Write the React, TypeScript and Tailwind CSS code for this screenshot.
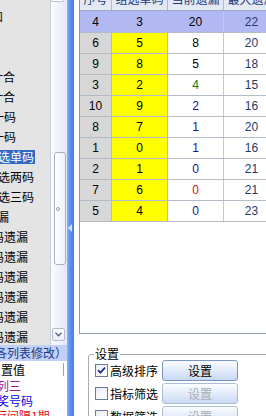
const leftItems = [
  { t: '和', c: '-ml-[9px]' },
  { t: '', c: '' },
  { t: '', c: '' },
  { t: '计合', c: '-ml-[9px]' },
  { t: '计合', c: '-ml-[9px]' },
  { t: '一码', c: '-ml-[8px]' },
  { t: '一码', c: '-ml-[8px]' },
  { t: '选单码', c: '-ml-[2px] h-[14px] leading-[14px] pr-[1px] bg-[#316ac5] text-white' },
  { t: '选两码', c: '-ml-[2px]' },
  { t: '选三码', c: '-ml-[2px]' },
  { t: '漏', c: '-ml-[3px]' },
  { t: '码遗漏', c: '-ml-[8px]' },
  { t: '码遗漏', c: '-ml-[8px]' },
  { t: '码遗漏', c: '-ml-[8px]' },
  { t: '码遗漏', c: '-ml-[8px]' },
  { t: '码遗漏', c: '-ml-[8px]' },
  { t: '码遗漏', c: '-ml-[8px]' },
]

const rows = [
  { v: ['4', '3', '20', '22'], c3: 'text-black', sel: true },
  { v: ['6', '5', '8', '20'], c3: 'text-black' },
  { v: ['9', '8', '5', '18'], c3: 'text-black' },
  { v: ['3', '2', '4', '15'], c3: 'text-[#0a7a0a]' },
  { v: ['10', '9', '2', '16'], c3: 'text-[#14148c]' },
  { v: ['8', '7', '1', '20'], c3: 'text-[#14148c]' },
  { v: ['1', '0', '1', '16'], c3: 'text-[#14148c]' },
  { v: ['2', '1', '0', '21'], c3: 'text-[#14148c]' },
  { v: ['7', '6', '0', '21'], c3: 'text-[#d81010]' },
  { v: ['5', '4', '0', '23'], c3: 'text-[#14148c]' },
]

const options = [
  { label: '高级排序', checked: true, enabled: true },
  { label: '指标筛选', checked: false, enabled: false },
  { label: '数据筛选', checked: false, enabled: false },
]

const Checkbox = ({ checked }: { checked: boolean }) => (
  <div className="flex h-[13px] w-[13px] shrink-0 items-center justify-center border border-[#6b7b95] bg-[linear-gradient(135deg,#e9ecf1,#ffffff)]">
    {checked && (
      <svg width="9" height="9" viewBox="0 0 9 9">
        <path d="M1 4.2 L3.4 6.6 L8 1.6" fill="none" stroke="#1f2f8f" strokeWidth="1.8" />
      </svg>
    )}
  </div>
)

export default function App() {
  return (
    <div className="flex h-[416px] w-[266px] overflow-hidden bg-white font-['Noto_Sans_CJK_SC',sans-serif] text-[12px] text-black">
      {/* left column: list + scrollbar, notes panel */}
      <div className="flex w-[67px] shrink-0 flex-col">
        <div className="flex h-[345px] shrink-0">
          <div className="w-[50px] overflow-hidden bg-[#e4e4e4] pt-[7px]">
            {leftItems.map((it, i) => (
              <div key={i} className="flex h-[20px] items-center whitespace-nowrap leading-[14px]">
                <span className={`shrink-0 ${it.c}`}>{it.t}</span>
              </div>
            ))}
          </div>
          <div className="flex w-[17px] flex-col border-l border-[#c9cdd6] bg-[linear-gradient(to_right,#fdfdff,#e2e7f5)]">
            <div className="h-[2px] w-[13px] rounded-b-[2px] border-x border-b border-[#b9c2d3] bg-white" />
            <div className="h-[150px]" />
            <div className="ml-[3px] flex h-[113px] w-[12px] items-center rounded-[3px] border border-[#a6b1c5] bg-[linear-gradient(to_right,#ffffff,#eef1f8)]">
              <div className="ml-[1px] h-[4px] w-[4px] rounded-full border border-[#9aa3b3]" />
            </div>
            <div className="flex-1" />
            <div className="ml-[1px] flex h-[13px] w-[13px] items-center justify-center rounded-[2px] border border-[#b2bccd] bg-[linear-gradient(#ffffff,#e8edf7)]">
              <svg width="7" height="5" viewBox="0 0 7 5">
                <path d="M0.5 0.8 L3.5 3.8 L6.5 0.8" fill="none" stroke="#4d6185" strokeWidth="1.3" />
              </svg>
            </div>
            <div className="h-[4px]" />
          </div>
        </div>
        <div className="flex h-[16px] shrink-0 items-center overflow-hidden whitespace-nowrap bg-[#c1d0f4] leading-[14px] text-[#183a8c]">
          <span className="-ml-[5px] shrink-0">各列表修改）</span>
        </div>
        <div className="flex-1 overflow-hidden bg-white leading-[14px]">
          <div className="flex h-[17px] items-center whitespace-nowrap">
            <span className="ml-[1px] w-[62px]">置值</span>
            <div className="h-[13px] w-px bg-[#a3a3a3]" />
          </div>
          <div className="flex h-[15px] items-center whitespace-nowrap text-[#9a1a9a]">
            <span className="-ml-[3px]">列三</span>
          </div>
          <div className="flex h-[15px] items-center whitespace-nowrap text-[#0a0ae6]">
            <span className="-ml-[3px]">奖号码</span>
          </div>
          <div className="flex h-[15px] items-center whitespace-nowrap text-[#e01010]">
            <span className="-ml-[5px]">行间隔1期</span>
          </div>
        </div>
      </div>

      {/* splitter */}
      <div className="flex w-[7px] shrink-0 flex-col bg-[linear-gradient(to_right,#8cb1f8,#5b8ef0_45%,#4a7fe8)]">
        <div className="h-[224px]" />
        <div className="ml-[1px] h-0 w-0 border-y-[4px] border-r-[4px] border-y-transparent border-r-[#d6e2fc]" />
      </div>

      {/* right panel */}
      <div className="flex min-w-0 flex-1 flex-col overflow-hidden pl-[5px]">
        <div className="flex h-[334px] w-[240px] shrink-0 flex-col overflow-hidden border-b border-l border-[#8c9bb2] font-['Liberation_Sans','Noto_Sans_CJK_SC',sans-serif]">
          <div className="-mt-[10px] flex h-[21px] shrink-0 border-b border-[#9ea9bb] bg-[#e3e9f4] text-[#1d3a7a]">
            <div className="flex w-[32px] items-center justify-center border-r border-[#b0bacb]">序号</div>
            <div className="flex w-[56px] items-center justify-center border-r border-[#b0bacb]">组选单码</div>
            <div className="flex w-[56px] items-center justify-center border-r border-[#b0bacb]">当前遗漏</div>
            <div className="flex w-[56px] items-center justify-center border-r border-[#b0bacb]">最大遗漏</div>
          </div>
          {rows.map((r, i) => (
            <div
              key={i}
              className={`flex shrink-0 border-b border-[#b4bcc8] ${i === 0 ? 'h-[22px]' : 'h-[21px]'} ${r.sel ? 'bg-[#b2b8f2]' : ''}`}
            >
              <div className={`flex w-[32px] items-center justify-center border-r border-[#b4bcc8] ${r.sel ? '' : 'bg-[#d7d7d7]'}`}>
                {r.v[0]}
              </div>
              <div className={`flex w-[56px] items-center justify-center border-r border-[#b4bcc8] ${r.sel ? '' : 'bg-[#ffff00]'}`}>
                {r.v[1]}
              </div>
              <div className={`flex w-[56px] items-center justify-center border-r border-[#c4cad4] ${r.c3}`}>{r.v[2]}</div>
              <div className="flex w-[56px] items-center justify-center border-r border-[#c4cad4] text-[#1f3c6e]">{r.v[3]}</div>
            </div>
          ))}
        </div>

        <fieldset className="ml-[9px] mt-[13px] w-[200px] shrink-0 rounded-[3px] border border-[#a9adb3] pl-[5px]">
          <legend className="px-[1px] leading-[14px]">设置</legend>
          <div className="-mt-[2px] flex flex-col">
            {options.map((o) => (
              <div key={o.label} className="flex h-[23px] items-center">
                <div className="ml-[1px]">
                  <Checkbox checked={o.checked} />
                </div>
                <span className="ml-[2px] w-[52px] whitespace-nowrap leading-[14px]">{o.label}</span>
                <button
                  className={`flex h-[21px] w-[76px] items-center justify-center rounded-[3px] border bg-[linear-gradient(#fbfdff,#dde8f8_60%,#c8d9f1)] leading-[14px] ${
                    o.enabled ? 'border-[#7896c2] text-black' : 'border-[#a9bdd8] text-[#a9adb4]'
                  }`}
                >
                  设置
                </button>
              </div>
            ))}
          </div>
        </fieldset>
      </div>
    </div>
  )
}
